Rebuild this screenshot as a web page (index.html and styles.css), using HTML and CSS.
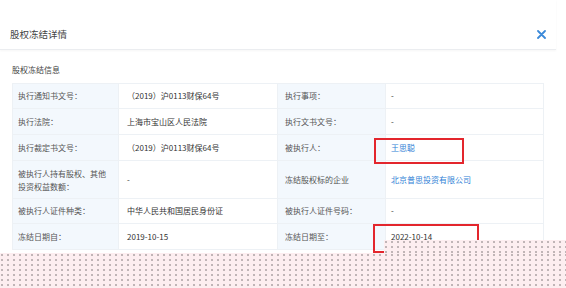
FILE: index.html
```html
<!DOCTYPE html>
<html lang="zh-CN">
<head>
<meta charset="utf-8">
<title>股权冻结详情</title>
<link rel="stylesheet" href="styles.css">
</head>
<body>
<div class="modal">
  <div class="modal-head">
    <span class="modal-title">股权冻结详情</span>
    <span class="close" aria-label="关闭">
      <svg width="9" height="9" viewBox="0 0 9 9"><path d="M1 1 L8 8 M8 1 L1 8" stroke="#3b8ad9" stroke-width="1.8" stroke-linecap="round"/></svg>
    </span>
  </div>
  <div class="section-title">股权冻结信息</div>
  <table class="info">
    <colgroup>
      <col class="c1"><col class="c2"><col class="c3"><col class="c4">
    </colgroup>
    <tr class="r25">
      <td class="lab l1">执行通知书文号：</td>
      <td class="val v1">（2019）沪0113财保64号</td>
      <td class="lab l2">执行事项：</td>
      <td class="val v2">-</td>
    </tr>
    <tr class="r26">
      <td class="lab l1">执行法院：</td>
      <td class="val v1">上海市宝山区人民法院</td>
      <td class="lab l2">执行文书文号：</td>
      <td class="val v2">-</td>
    </tr>
    <tr class="r26">
      <td class="lab l1">执行裁定书文号：</td>
      <td class="val v1">（2019）沪0113财保64号</td>
      <td class="lab l2">被执行人：</td>
      <td class="val v2"><span class="link">王思聪</span></td>
    </tr>
    <tr class="r38">
      <td class="lab l1 wrap">被执行人持有股权、其他投资权益数额：</td>
      <td class="val v1">-</td>
      <td class="lab l2">冻结股权标的企业</td>
      <td class="val v2"><span class="link">北京普思投资有限公司</span></td>
    </tr>
    <tr class="r25">
      <td class="lab l1">被执行人证件种类：</td>
      <td class="val v1">中华人民共和国居民身份证</td>
      <td class="lab l2">被执行人证件号码：</td>
      <td class="val v2">-</td>
    </tr>
    <tr class="r26">
      <td class="lab l1">冻结日期自：</td>
      <td class="val v1">2019-10-15</td>
      <td class="lab l2">冻结日期至：</td>
      <td class="val v2">2022-10-14</td>
    </tr>
  </table>
  <div class="mark mark-a"></div>
  <div class="mark mark-b"></div>
  <div class="tear tear-right"></div>
  <div class="tear tear-bottom"></div>
</div>
</body>
</html>
```
FILE: styles.css
```css
html, body {
  margin: 0;
  padding: 0;
  background: #ffffff;
}
body {
  width: 566px;
  height: 288px;
  overflow: hidden;
  font-family: "Noto Sans CJK SC", "Noto Sans", sans-serif;
  color: #333;
}
.modal {
  position: relative;
  width: 566px;
  height: 288px;
}
.modal-head {
  width: 556px;
  height: 50px;
  box-sizing: border-box;
  border-bottom: 1px solid #ebedf0;
  box-shadow: 0 1px 2px rgba(0,0,0,0.04);
  display: flex;
  align-items: center;
  justify-content: space-between;
  padding: 18px 10px 0 10px;
}
.modal-title {
  font-size: 9.5px;
  color: #444;
}
.close {
  display: flex;
  margin-right: 0;
  margin-top: 2px;
}
.section-title {
  font-size: 8px;
  color: #444;
  padding: 14px 0 0 12px;
  height: 33px;
  box-sizing: border-box;
  line-height: 12px;
}
.info {
  margin: 0 0 0 12px;
  border-collapse: collapse;
  table-layout: fixed;
  width: 531px;
  font-size: 8px;
}
.c1 { width: 106px; }
.c2 { width: 159px; }
.c3 { width: 108px; }
.c4 { width: 158px; }
.info td {
  border: 1px solid #edf1f5;
  padding: 0;
  vertical-align: middle;
  white-space: nowrap;
  line-height: 12px;
}
.r25 td { height: 24px; }
.r26 td { height: 25px; }
.r38 td { height: 37px; }
.lab {
  background: #f3f8fd;
  color: #555;
}
.val {
  background: #fff;
  color: #333;
}
.l1 { padding-left: 5px !important; }
.v1 { padding-left: 8px !important; }
.l2 { padding-left: 7px !important; }
.v2 { padding-left: 5px !important; }
.wrap {
  white-space: normal !important;
  padding-right: 10px !important;
  line-height: 13px !important;
}
.link {
  color: #2f7fd6;
}
.mark {
  position: absolute;
  border: 2px solid #e3262d;
  box-sizing: border-box;
}
.mark-a {
  left: 374px;
  top: 138px;
  width: 90px;
  height: 26px;
}
.mark-b {
  left: 373px;
  top: 224px;
  width: 106px;
  height: 29px;
}
.tear {
  position: absolute;
  background-color: #fdeef0;
  background-image: radial-gradient(circle at 2px 2px, #bfb3b5 0.7px, transparent 1.1px);
  background-size: 6px 5px;
}
.tear-right {
  left: 384px;
  top: 240px;
  width: 182px;
  height: 13px;
}
.tear-bottom {
  left: 0;
  top: 253px;
  width: 566px;
  height: 35px;
}
```
